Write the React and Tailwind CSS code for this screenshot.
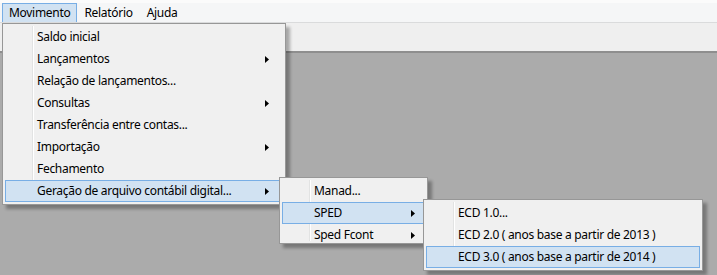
import React from "react";

const Arrow = () => (
  <svg width="4" height="7" viewBox="0 0 4 7" className="block">
    <path d="M0 0 L4 3.5 L0 7 Z" fill="#000" />
  </svg>
);

// gutter line sits behind the items, like the Windows 7 popup menu
function Menu({ items, className, arrowPad = "pr-[13px]" }) {
  return (
    <div
      className={
        "absolute bg-[#f0f0f0] border border-[#979797] shadow-[4px_4px_3px_rgba(0,0,0,0.3)] p-[2px] " +
        className
      }
    >
      <div className="absolute top-[2px] bottom-[2px] left-[29px] w-[2px] border-l border-l-[#e2e3e3] border-r border-r-white" />
      {items.map((it) => (
        <div
          key={it.label}
          className={
            "relative flex items-center h-[22px] border pl-[31px] " +
            arrowPad +
            " " +
            (it.active ? "bg-[#d1e2f2] border-[#78aee5]" : "border-transparent")
          }
        >
          <span className="flex-1 whitespace-nowrap">{it.label}</span>
          {it.sub && <Arrow />}
        </div>
      ))}
    </div>
  );
}

export default function App() {
  const main = [
    { label: "Saldo inicial" },
    { label: "Lançamentos", sub: true },
    { label: "Relação de lançamentos..." },
    { label: "Consultas", sub: true },
    { label: "Transferência entre contas..." },
    { label: "Importação", sub: true },
    { label: "Fechamento" },
    { label: "Geração de arquivo contábil digital...", sub: true, active: true },
  ];
  const sub1 = [
    { label: "Manad..." },
    { label: "SPED", sub: true, active: true },
    { label: "Sped Fcont", sub: true },
  ];
  const sub2 = [
    { label: "ECD 1.0..." },
    { label: "ECD 2.0 ( anos base a partir de 2013 )" },
    { label: "ECD 3.0 ( anos base a partir de 2014 )", active: true },
  ];

  return (
    <div
      className="relative w-[717px] h-[275px] overflow-hidden bg-[#ababab] text-[12px] tracking-[-0.3px] text-black"
      style={{ fontFamily: '"Noto Sans", "Open Sans", sans-serif' }}
    >
      {/* menu bar */}
      <div className="h-[23px] bg-[#f5f6f7] border-t-[3px] border-t-[#fbfbfb] border-b border-b-[#dadbdc] flex items-stretch px-[2px]">
        <div className="flex items-center px-[6px] bg-[#d1e2f2] border border-[#78aee5] border-b-0">Movimento</div>
        <div className="flex items-center px-[7px]">Relatório</div>
        <div className="flex items-center px-[6px] ml-[1px]">Ajuda</div>
      </div>
      {/* toolbar */}
      <div className="h-[30px] bg-[#efefef] border-b-2 border-b-[#8e8e8e]" />

      <Menu items={main} className="left-[2px] top-[23px] w-[284px] h-[182px]" />
      <Menu items={sub1} className="left-[279px] top-[177px] w-[149px] h-[67px]" arrowPad="pr-[9px]" />
      <Menu items={sub2} className="left-[423px] top-[199px] w-[280px] h-[72px]" />
    </div>
  );
}
